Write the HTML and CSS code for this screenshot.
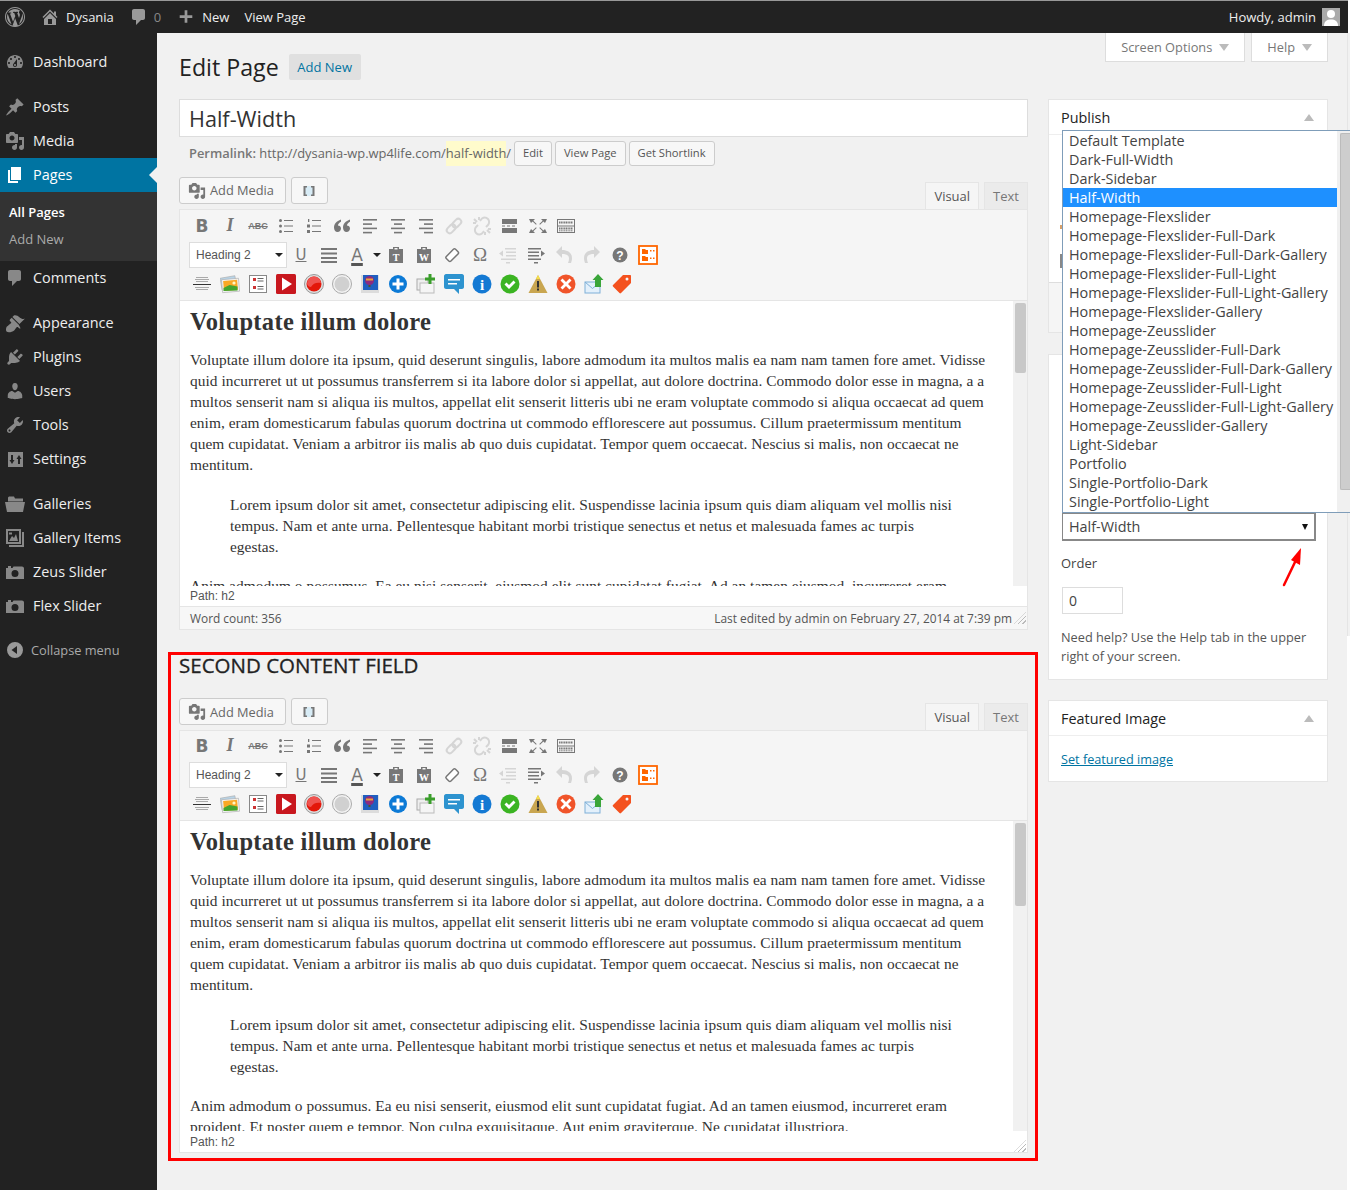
FILE: index.html
```html
<!DOCTYPE html>
<html lang="en">
<head>
<meta charset="utf-8">
<title>Edit Page</title>
<link rel="stylesheet" href="styles.css">
</head>
<body>
<svg class="defs" aria-hidden="true">
  <defs>
    <symbol id="i-wp" viewBox="0 0 20 20"><path d="M20 10c0-5.52-4.48-10-10-10S0 4.48 0 10s4.48 10 10 10 10-4.48 10-10zM10 1.01c4.97 0 8.99 4.02 8.99 8.99s-4.02 8.99-8.99 8.99S1.01 14.97 1.01 10 5.03 1.01 10 1.01zM8.01 14.82L4.96 6.61c.49-.03 1.05-.08 1.05-.08.43-.05.38-1.01-.06-.99 0 0-1.29.1-2.13.1-.15 0-.33 0-.52-.01 1.44-2.17 3.9-3.6 6.7-3.6 2.09 0 3.99.79 5.41 2.09-.6-.1-1.45.35-1.45 1.08 0 .45.27.83.55 1.28.22.38.34.83.34 1.49 0 .89-.83 3.01-.83 3.01l-1.8-4.99c.32-.02.5-.11.5-.11.43-.04.38-1.08-.05-1.06 0 0-1.3.11-2.14.11-.78 0-2.11-.11-2.11-.11-.43-.02-.48 1.02-.05 1.06l.84.08 1.12 3.04zm6.02 2.15L16.64 10s.67-1.69.39-3.81c.63 1.14.94 2.42.94 3.81 0 2.96-1.56 5.58-3.94 6.97zM2.68 6.77L6.5 17.25c-2.7-1.33-4.47-4.08-4.47-7.25 0-1.16.2-2.23.65-3.23zm7.45 4.53l2.62 7.05c.03.05.05.1.08.14-.88.31-1.82.48-2.83.48-.84 0-1.66-.12-2.43-.35z"/></symbol>
    <symbol id="i-home" viewBox="0 0 20 20"><path d="M16 8.5l1.53 1.53-1.06 1.06L10 4.62l-6.47 6.47-1.06-1.06L10 2.5l4 4v-2h2v4zm-6-2.46l6 5.99V18H4v-5.97zM12 17v-5H8v5h4z"/></symbol>
    <symbol id="i-plus" viewBox="0 0 20 20"><path d="M17 8v3h-5.5v5.5h-3V11H3V8h5.500V2.500h3V8z"/></symbol>
    <symbol id="i-dash" viewBox="0 0 20 20"><path d="M3.76 16h12.48c1.1-1.37 1.76-3.11 1.76-5 0-4.42-3.58-8-8-8s-8 3.58-8 8c0 1.89.66 3.63 1.76 5zM10 4c.55 0 1 .45 1 1s-.45 1-1 1-1-.45-1-1 .45-1 1-1zM6 6c.55 0 1 .45 1 1s-.45 1-1 1-1-.45-1-1 .45-1 1-1zm8 0c.55 0 1 .45 1 1s-.45 1-1 1-1-.45-1-1 .45-1 1-1zm-5.370 5.550L12 7v6c0 1.100-.9 2-2 2s-2-.9-2-2c0-.57.24-1.080.63-1.450zM4 10c.55 0 1 .45 1 1s-.45 1-1 1-1-.45-1-1 .45-1 1-1zm12 0c.55 0 1 .45 1 1s-.45 1-1 1-1-.45-1-1 .45-1 1-1zm-5 3c0-.55-.45-1-1-1s-1 .45-1 1 .45 1 1 1 1-.45 1-1z"/></symbol>
    <symbol id="i-pin" viewBox="0 0 20 20"><path d="M10.44 3.02l1.82-1.820 6.360 6.350-1.830 1.820c-1.050-.68-2.480-.57-3.410.36l-.75.75c-.92.93-1.040 2.350-.35 3.410l-1.830 1.820-2.410-2.410-2.800 2.790c-.42.42-3.380 2.710-3.800 2.290s1.860-3.390 2.280-3.810l2.790-2.790L4.100 9.360l1.830-1.820c1.050.69 2.480.57 3.400-.36l.75-.75c.93-.92 1.050-2.350.36-3.410z"/></symbol>
    <symbol id="i-media" viewBox="0 0 20 20"><path d="M13 11V4c0-.55-.45-1-1-1h-1.670L9 1H5L3.670 3H2c-.55 0-1 .45-1 1v7c0 .55.45 1 1 1h10c.55 0 1-.45 1-1zM7 4.500c1.380 0 2.500 1.120 2.500 2.500S8.380 9.500 7 9.500 4.500 8.380 4.500 7 5.620 4.500 7 4.500zM14 6h5v10.500c0 1.380-1.120 2.500-2.500 2.500S14 17.880 14 16.500s1.120-2.500 2.500-2.500c.17 0 .34.02.5.05V9h-3V6zm-4 8.050V13h2v3.500c0 1.380-1.120 2.500-2.500 2.500S7 17.880 7 16.500 8.120 14 9.500 14c.17 0 .34.02.5.05z"/></symbol>
    <symbol id="i-page" viewBox="0 0 20 20"><path d="M6 15V2h10v13H6zm-1 1h8v2H3V5h2v11z"/></symbol>
    <symbol id="i-comment" viewBox="0 0 20 20"><path d="M5 2h9c1.100 0 2 .9 2 2v7c0 1.100-.9 2-2 2h-2l-5 5v-5H5c-1.100 0-2-.9-2-2V4c0-1.100.9-2 2-2z"/></symbol>
    <symbol id="i-brush" viewBox="0 0 20 20"><path d="M14.480 11.060L7.410 3.990l1.500-1.500c.5-.56 2.300-.47 3.510.32 1.210.8 1.430 1.280 2.910 2.100 1.180.64 2.450 1.260 4.450.85zm-.71.71L6.700 4.700 4.930 6.470c-.39.39-.39 1.020 0 1.410l1.060 1.060c.39.39.39 1.030 0 1.420-.6.6-1.430 1.110-2.210 1.690-.35.26-.7.53-1.010.84C1.430 13.230.91 15.250 1 17c.09 1.750 1.260 2.250 3.010 2.220 1.750-.07 3.770-.41 5.120-1.760.31-.31.58-.66.84-1.010.58-.78 1.090-1.610 1.690-2.210.39-.39 1.030-.39 1.420 0l1.060 1.060c.39.39 1.020.39 1.410 0z"/></symbol>
    <symbol id="i-plug" viewBox="0 0 20 20"><path d="M13.110 4.360L9.870 7.600 8 5.730l3.240-3.240c.35-.34 1.050-.2 1.560.32.52.51.66 1.210.31 1.550zm-8 1.770l.91-1.120 9.010 9.010-1.190.84c-.71.71-2.630 1.160-3.820 1.160H6.140L4.900 17.260c-.59.59-1.540.59-2.120 0-.59-.58-.59-1.530 0-2.120l1.240-1.240v-3.880c0-1.130.4-3.190 1.090-3.890zm7.260 3.970l3.240-3.240c.34-.35 1.040-.21 1.550.31.52.51.66 1.210.31 1.550l-3.240 3.250z"/></symbol>
    <symbol id="i-user" viewBox="0 0 20 20"><path d="M10 9.250c-2.270 0-2.730-3.440-2.730-3.440C7 4.020 7.820 2 9.970 2c2.160 0 2.980 2.020 2.710 3.810 0 0-.41 3.440-2.680 3.440zm0 2.570L12.720 10c2.390 0 4.520 2.330 4.520 4.530v2.490s-3.650 1.130-7.240 1.130c-3.650 0-7.240-1.130-7.240-1.130v-2.490c0-2.250 1.940-4.480 4.470-4.480z"/></symbol>
    <symbol id="i-tool" viewBox="0 0 20 20"><path d="M16.680 9.770c-1.340 1.340-3.300 1.670-4.950.99l-5.410 6.520c-.99.99-2.590.99-3.580 0s-.99-2.590 0-3.570l6.520-5.420c-.68-1.650-.35-3.610.99-4.950 1.280-1.280 3.120-1.620 4.720-1.060l-2.890 2.890 2.820 2.820 2.860-2.870c.53 1.580.18 3.390-1.080 4.650zM3.810 16.210c.4.39 1.040.39 1.430 0 .4-.4.4-1.040 0-1.430-.39-.4-1.030-.4-1.430 0-.39.39-.39 1.030 0 1.430z"/></symbol>
    <symbol id="i-set" viewBox="0 0 20 20"><path fill-rule="evenodd" d="M3 3h15v15H3zM6 6v5H4.500L7 15l2.500-4H8V6zm7 9v-5h-1.500L14 6l2.500 4H15v5z"/></symbol>
    <symbol id="i-folder" viewBox="0 0 20 20"><path d="M3 3.500l1-1h5l1 2h8v3H3zM0 8h20l-2 10H2z"/></symbol>
    <symbol id="i-gal" viewBox="0 0 20 20"><path fill-rule="evenodd" d="M1 1h15v15H1zM3 3v11h11V3zM4 13l3-5 2 2 2-4 2 7zM4 4.500h3v2H4zM17 4h2v15H4v-2h13z"/></symbol>
    <symbol id="i-cam" viewBox="0 0 20 20"><path fill-rule="evenodd" d="M1 6h2V4h3v2h1.500l1-1.500H17c1 0 2 .7 2 2V17H1zM10 8a3.500 3.500 0 1 0 0 7 3.500 3.500 0 0 0 0-7z"/></symbol>
    <symbol id="i-collapse" viewBox="0 0 20 20"><path fill-rule="evenodd" d="M10 2a8 8 0 1 0 0 16 8 8 0 0 0 0-16zM12 6v8L6.500 10z"/></symbol>
    <symbol id="i-short" viewBox="0 0 14 14"><rect x="3" y="2" width="8" height="10" fill="#d8ecf6"/><path d="M5 2H1.500v10H5v-1.500H3.500v-7H5zM9 2h3.500v10H9v-1.500h1.500v-7H9z" fill="#777"/></symbol>

    <symbol id="t-bul" viewBox="0 0 20 20"><g fill="#777"><circle cx="4.500" cy="4.500" r="1.500"/><circle cx="4.500" cy="10" r="1.500"/><circle cx="4.500" cy="15.500" r="1.500"/><rect x="8" y="4" width="9" height="1"/><rect x="8" y="9.500" width="9" height="1"/><rect x="8" y="15" width="9" height="1"/></g></symbol>
    <symbol id="t-num" viewBox="0 0 20 20"><g fill="#777"><rect x="4" y="3" width="1.300" height="3"/><rect x="3" y="8.500" width="3" height="3"/><rect x="3" y="14" width="3" height="3"/><rect x="8" y="4" width="9" height="1"/><rect x="8" y="9.500" width="9" height="1"/><rect x="8" y="15" width="9" height="1"/></g></symbol>
    <symbol id="t-quote" viewBox="0 0 20 20"><path fill="#777" d="M9 3.500C4.500 5 2 8 2 11.500 2 14 3.400 16 5.500 16S9 14.500 9 12.600s-1.400-3-3.100-3C6 8 7.200 6.800 9 5.700zM18 3.500c-4.500 1.500-7 4.500-7 8 0 2.500 1.400 4.500 3.500 4.500s3.500-1.500 3.500-3.400-1.400-3-3.100-3c.1-1.600 1.300-2.800 3.100-3.900z"/></symbol>
    <symbol id="t-al" viewBox="0 0 20 20"><g fill="#777"><rect x="3" y="3" width="14" height="1.600"/><rect x="3" y="7.300" width="9" height="1.600"/><rect x="3" y="11.600" width="14" height="1.600"/><rect x="3" y="15.800" width="9" height="1.600"/></g></symbol>
    <symbol id="t-ac" viewBox="0 0 20 20"><g fill="#777"><rect x="3" y="3" width="14" height="1.600"/><rect x="6" y="7.300" width="8" height="1.600"/><rect x="3" y="11.600" width="14" height="1.600"/><rect x="6" y="15.800" width="8" height="1.600"/></g></symbol>
    <symbol id="t-ar" viewBox="0 0 20 20"><g fill="#777"><rect x="3" y="3" width="14" height="1.600"/><rect x="8" y="7.300" width="9" height="1.600"/><rect x="3" y="11.600" width="14" height="1.600"/><rect x="8" y="15.800" width="9" height="1.600"/></g></symbol>
    <symbol id="t-link" viewBox="0 0 20 20"><g fill="none" stroke="#d5d5d5" stroke-width="2" transform="rotate(-45 10 10)"><rect x="1" y="7" width="10" height="6" rx="3"/><rect x="9" y="7" width="10" height="6" rx="3"/></g></symbol>
    <symbol id="t-unlink" viewBox="0 0 20 20"><g fill="none" stroke="#d5d5d5" stroke-width="2"><path d="M8 5l2-2.500c2-1.500 4.500-1 6 .5s1.500 4.500 0 6l-2 2"/><path d="M12 15l-2 2.500c-2 1.500-4.500 1-6-.5s-1.500-4.500 0-6l2-2"/><path d="M2 3l3 3M1 7h3M7 1v3M18 17l-3-3M19 13h-3M13 19v-3"/></g></symbol>
    <symbol id="t-more" viewBox="0 0 20 20"><g fill="#777"><rect x="2" y="3" width="15" height="5"/><rect x="2" y="12" width="15" height="5"/><rect x="2" y="9.500" width="3" height="1"/><rect x="7" y="9.500" width="3" height="1"/><rect x="12" y="9.500" width="3" height="1"/></g></symbol>
    <symbol id="t-full" viewBox="0 0 20 20"><path fill="#777" d="M1 3h6L5.300 4.700 8.700 8 8 8.700 4.600 5.400 3 7zM19 3h-6l1.700 1.700L11.300 8l.7.7 3.400-3.300L17 7zM1 17h6l-1.700-1.700 3.400-3.300-.7-.7-3.400 3.300L3 13zM19 17h-6l1.700-1.700-3.400-3.300.7-.7 3.400 3.300L17 13z"/></symbol>
    <symbol id="t-kbd" viewBox="0 0 20 20"><rect x="1.500" y="3.500" width="17" height="13" fill="none" stroke="#777"/><rect x="1.500" y="9.500" width="17" height="1" fill="#777"/><g fill="none" stroke="#777" stroke-width="2" stroke-dasharray="1.200 .5"><path d="M3 6.500h14"/><path d="M3 12.500h14"/><path d="M3 14.800h14" stroke-width="1"/></g></symbol>
    <symbol id="t-just" viewBox="0 0 20 20"><g fill="#777"><rect x="2" y="3" width="16" height="2"/><rect x="2" y="7.500" width="16" height="2"/><rect x="2" y="12" width="16" height="2"/><rect x="2" y="16" width="16" height="2"/></g></symbol>
    <symbol id="t-ptxt" viewBox="0 0 20 20"><path fill="#777" fill-rule="evenodd" d="M7 2h6v2h4v14H3V4h4zM8.500 3v1.500h3V3z"/><text x="10" y="16" class="svg-t">T</text></symbol>
    <symbol id="t-pword" viewBox="0 0 20 20"><path fill="#777" fill-rule="evenodd" d="M7 2h6v2h4v14H3V4h4zM8.500 3v1.500h3V3z"/><text x="10" y="16" class="svg-t">W</text></symbol>
    <symbol id="t-erase" viewBox="0 0 20 20"><g transform="rotate(-45 10 10)"><rect x="3.500" y="7" width="13" height="6.500" rx="1.500" fill="#fff" stroke="#777" stroke-width="1.500"/></g></symbol>
    <symbol id="t-out" viewBox="0 0 20 20"><g fill="#d5d5d5"><rect x="7" y="3" width="11" height="1.500"/><rect x="8" y="6.500" width="10" height="1.500"/><rect x="8" y="10" width="10" height="1.500"/><rect x="3" y="13.500" width="15" height="1.500"/><rect x="8" y="17" width="4" height="1.500"/><path d="M1 8.500l4-3v6z"/></g></symbol>
    <symbol id="t-ind" viewBox="0 0 20 20"><g fill="#777"><rect x="2" y="3" width="13" height="1.500"/><rect x="2" y="6.500" width="11" height="1.500"/><rect x="2" y="10" width="11" height="1.500"/><rect x="2" y="13.500" width="13" height="1.500"/><rect x="8" y="17" width="4" height="1.500"/><path d="M19 8.500l-4-3v6z"/></g></symbol>
    <symbol id="t-undo" viewBox="0 0 20 20"><path fill="#d5d5d5" d="M2 7l6-6v4c6 0 10 3 10 8 0 2-.5 3.500-1 5h-3c.7-1.500 1-3 1-4.500C15 10 12 9 8 9v4z"/></symbol>
    <symbol id="t-redo" viewBox="0 0 20 20"><path fill="#d5d5d5" d="M18 7l-6-6v4C6 5 2 8 2 13c0 2 .5 3.500 1 5h3c-.7-1.500-1-3-1-4.500C5 10 8 9 12 9v4z"/></symbol>
    <symbol id="t-help" viewBox="0 0 20 20"><circle cx="10" cy="10" r="7.500" fill="#777"/><text x="10" y="14.500" class="svg-q">?</text></symbol>
    <symbol id="t-org" viewBox="0 0 20 20"><rect x="1" y="1" width="18" height="18" fill="#fff" stroke="#f60" stroke-width="1.800"/><g fill="#f60"><path d="M4 4h3l1 1h2v4H4zM4 11h3l1 1h2v4H4z"/><rect x="12" y="5" width="1.500" height="1.500"/><rect x="15" y="5" width="1.500" height="1.500"/><rect x="12" y="12.500" width="1.500" height="1.500"/><rect x="15" y="12.500" width="1.500" height="1.500"/></g></symbol>

    <symbol id="c-break" viewBox="0 0 20 20"><g fill="#aaa"><rect x="4" y="3" width="12" height="1"/><rect x="3" y="5" width="14" height="1"/><rect x="4" y="7" width="12" height="1"/><rect x="3" y="13" width="14" height="1"/><rect x="4" y="15" width="12" height="1"/></g><rect x="1" y="10" width="18" height="1" fill="#333"/></symbol>
    <symbol id="c-photo" viewBox="0 0 20 20"><rect x="1" y="3" width="15" height="12" fill="#b8d4e8" stroke="#aaa" stroke-width=".6" transform="rotate(-10 8 9)"/><rect x="2" y="5" width="17" height="13" fill="#f4f4f4" stroke="#aaa" stroke-width=".6" transform="rotate(-5 10 11)"/><rect x="3.500" y="6.500" width="14" height="10" fill="#f9a825" transform="rotate(-5 10 11)"/><path d="M3.500 14l6-3 8 1.500v4l-14 .5z" fill="#43a52e"/><circle cx="14" cy="9" r="1.600" fill="#fff7c0"/></symbol>
    <symbol id="c-check" viewBox="0 0 20 20"><rect x="1.500" y="1.500" width="17" height="17" fill="#fff" stroke="#888"/><rect x="5" y="4" width="3" height="3" fill="#c33"/><rect x="5" y="12" width="3" height="3" fill="#c33"/><g fill="#666"><rect x="9.500" y="4" width="6" height="1"/><rect x="9.500" y="6.500" width="6" height="1"/><rect x="9.500" y="12" width="6" height="1"/><rect x="9.500" y="14.500" width="6" height="1"/></g></symbol>
    <symbol id="c-play" viewBox="0 0 20 20"><rect x="0" y="0" width="20" height="20" rx="1.500" fill="#c8171e"/><path d="M6 3.500l10 6.500-10 6.500z" fill="#fff"/></symbol>
    <symbol id="c-rec" viewBox="0 0 20 20"><circle cx="10" cy="10" r="9.500" fill="#ddd" stroke="#999"/><circle cx="10" cy="10" r="7.500" fill="#e3170a"/><path d="M3 10a7 7 0 0 1 14-1c-4-1-8 0-10 4-2 0-3-1-4-3z" fill="#ef5350"/></symbol>
    <symbol id="c-grey" viewBox="0 0 20 20"><circle cx="10" cy="10" r="9.500" fill="#f2f2f2" stroke="#aaa"/><circle cx="10" cy="10" r="7.500" fill="#d0d0d0"/></symbol>
    <symbol id="c-ball" viewBox="0 0 20 20"><rect x="1" y="1" width="18" height="18" fill="#dcdcdc"/><rect x="3" y="1" width="15" height="15" fill="#1f5fbf"/><circle cx="9.500" cy="6.500" r="4.500" fill="#8e2a7e"/><path d="M6 4.500h7v2H6z" fill="#e8a13a"/><rect x="8.500" y="11" width="2" height="2" fill="#552"/></symbol>
    <symbol id="c-plus" viewBox="0 0 20 20"><circle cx="10" cy="10" r="9" fill="#0c7ad6"/><path d="M8.500 4.500h3v4h4v3h-4v4h-3v-4h-4v-3h4z" fill="#fff"/></symbol>
    <symbol id="c-add" viewBox="0 0 20 20"><rect x="1" y="5" width="11" height="11" fill="#eee" stroke="#aaa"/><rect x="4" y="9" width="14" height="10" fill="#f5f5f5" stroke="#bbb"/><path d="M12.500 0h3v3.500H19v3h-3.500V10h-3V6.500H9v-3h3.500z" fill="#3a9e2b"/></symbol>
    <symbol id="c-chat" viewBox="0 0 20 20"><path d="M2 0h16c1 0 2 1 2 2v11c0 1-1 2-2 2h-3v5l-5-5H2c-1 0-2-1-2-2V2c0-1 1-2 2-2z" fill="#2d93cf"/><rect x="4" y="5" width="12" height="1.500" fill="#fff"/><rect x="4" y="9" width="9" height="1.500" fill="#fff"/></symbol>
    <symbol id="c-info" viewBox="0 0 20 20"><circle cx="10" cy="10" r="9.500" fill="#1479d3"/><text x="10" y="15.500" class="svg-i">i</text></symbol>
    <symbol id="c-ok" viewBox="0 0 20 20"><circle cx="10" cy="10" r="9.500" fill="#3bb422"/><path d="M4.500 10.500l2-2 2.500 2.500 4.500-4.500 2 2-6.500 6.500z" fill="#fff"/></symbol>
    <symbol id="c-warn" viewBox="0 0 20 20"><path d="M10 1l9.500 18H.5z" fill="#c9a650"/><path d="M10 1l2 4H8z" fill="#f5e04a"/><rect x="9" y="7" width="2" height="6.500" fill="#333"/><rect x="9" y="14.500" width="2" height="2" fill="#333"/></symbol>
    <symbol id="c-x" viewBox="0 0 20 20"><circle cx="10" cy="10" r="9.500" fill="#f0542a"/><path d="M6.500 4.500L10 8l3.500-3.500 2 2L12 10l3.500 3.500-2 2L10 12l-3.500 3.500-2-2L8 10 4.500 6.500z" fill="#fff"/></symbol>
    <symbol id="c-mail" viewBox="0 0 20 20"><rect x="1" y="8" width="15" height="11" fill="#e3f0fb" stroke="#7fb0d8"/><path d="M1 8l7.500 6.500L16 8" fill="none" stroke="#7fb0d8"/><path d="M14 0l5.500 6H17v7h-6V6H8.500z" fill="#3aa53a"/></symbol>
    <symbol id="c-tag" viewBox="0 0 20 20"><path fill-rule="evenodd" d="M11 1h7c.6 0 1 .4 1 1v7L9 19c-.5.5-1 .5-1.500 0L1 12.500c-.5-.5-.5-1 0-1.500zM15 3.500a1.500 1.500 0 1 0 0 3 1.500 1.500 0 0 0 0-3z" fill="#f4511e"/></symbol>
  </defs>
</svg>

<header class="adminbar">
  <div class="ab-group">
    <svg class="ab-wp"><use href="#i-wp"/></svg>
    <svg class="ab-home"><use href="#i-home"/></svg>
    <span class="ab-site">Dysania</span>
    <svg class="ab-com"><use href="#i-comment"/></svg>
    <span class="ab-zero">0</span>
    <svg class="ab-plus"><use href="#i-plus"/></svg>
    <span class="ab-new">New</span>
    <span class="ab-view">View Page</span>
  </div>
  <div class="ab-group">
    <span>Howdy, admin</span>
    <span class="avatar"><svg viewBox="0 0 18 18"><circle cx="9" cy="6" r="4"/><path d="M2 18c0-5 3-6.500 7-6.500s7 1.500 7 6.500z"/></svg></span>
  </div>
</header>

<div class="layout">
  <nav class="menu">
    <a class="mi first"><svg><use href="#i-dash"/></svg>Dashboard</a>
    <a class="mi sep"><svg><use href="#i-pin"/></svg>Posts</a>
    <a class="mi"><svg><use href="#i-media"/></svg>Media</a>
    <a class="mi current"><svg><use href="#i-page"/></svg>Pages</a>
    <div class="submenu">
      <a class="sub-on">All Pages</a>
      <a>Add New</a>
    </div>
    <a class="mi"><svg><use href="#i-comment"/></svg>Comments</a>
    <a class="mi sep"><svg><use href="#i-brush"/></svg>Appearance</a>
    <a class="mi"><svg><use href="#i-plug"/></svg>Plugins</a>
    <a class="mi"><svg><use href="#i-user"/></svg>Users</a>
    <a class="mi"><svg><use href="#i-tool"/></svg>Tools</a>
    <a class="mi"><svg><use href="#i-set"/></svg>Settings</a>
    <a class="mi sep"><svg><use href="#i-folder"/></svg>Galleries</a>
    <a class="mi"><svg><use href="#i-gal"/></svg>Gallery Items</a>
    <a class="mi"><svg><use href="#i-cam"/></svg>Zeus Slider</a>
    <a class="mi"><svg><use href="#i-cam"/></svg>Flex Slider</a>
    <a class="mi collapse"><svg><use href="#i-collapse"/></svg>Collapse menu</a>
  </nav>

  <main class="main">
    <div class="headrow">
      <div class="titlewrap">
        <h1>Edit Page</h1>
        <a class="addnew">Add New</a>
      </div>
      <div class="metatabs">
        <span class="metatab">Screen Options<i class="tri-d"></i></span>
        <span class="metatab">Help<i class="tri-d"></i></span>
      </div>
    </div>

    <div class="cols">
      <div class="col-left">
        <div class="titlebox">Half-Width</div>
        <div class="permalink">
          <b>Permalink:</b>&nbsp;http://dysania-wp.wp4life.com/<mark>half-width</mark>/
          <span class="pbtn">Edit</span><span class="pbtn">View Page</span><span class="pbtn">Get Shortlink</span>
        </div>

        <section class="editor first-ed">
          <div class="ed-top">
            <div class="ed-media">
              <span class="mbtn"><svg><use href="#i-media"/></svg>Add Media</span>
              <span class="mbtn short"><svg><use href="#i-short"/></svg></span>
            </div>
            <div class="ed-tabs"><span class="tab on">Visual</span><span class="tab">Text</span></div>
          </div>
          <div class="toolbar">
            <div class="tbrow">
              <span class="tb tb-b">B</span><span class="tb tb-i">I</span><span class="tb tb-s">ABC</span>
              <span class="tb"><svg><use href="#t-bul"/></svg></span><span class="tb"><svg><use href="#t-num"/></svg></span><span class="tb"><svg><use href="#t-quote"/></svg></span>
              <span class="tb"><svg><use href="#t-al"/></svg></span><span class="tb"><svg><use href="#t-ac"/></svg></span><span class="tb"><svg><use href="#t-ar"/></svg></span>
              <span class="tb"><svg><use href="#t-link"/></svg></span><span class="tb"><svg><use href="#t-unlink"/></svg></span><span class="tb"><svg><use href="#t-more"/></svg></span>
              <span class="tb"><svg><use href="#t-full"/></svg></span><span class="tb"><svg><use href="#t-kbd"/></svg></span>
            </div>
            <div class="tbrow">
              <span class="fmt">Heading 2<i class="caret"></i></span>
              <span class="tb tb-u">U</span><span class="tb"><svg><use href="#t-just"/></svg></span><span class="tb tb-a">A</span><span class="tbcaret"><i class="caret"></i></span>
              <span class="tb"><svg><use href="#t-ptxt"/></svg></span><span class="tb"><svg><use href="#t-pword"/></svg></span><span class="tb"><svg><use href="#t-erase"/></svg></span>
              <span class="tb tb-o">Ω</span><span class="tb"><svg><use href="#t-out"/></svg></span><span class="tb"><svg><use href="#t-ind"/></svg></span>
              <span class="tb"><svg><use href="#t-undo"/></svg></span><span class="tb"><svg><use href="#t-redo"/></svg></span><span class="tb"><svg><use href="#t-help"/></svg></span><span class="tb"><svg><use href="#t-org"/></svg></span>
            </div>
            <div class="tbrow">
              <span class="tb"><svg><use href="#c-break"/></svg></span><span class="tb"><svg><use href="#c-photo"/></svg></span><span class="tb"><svg><use href="#c-check"/></svg></span><span class="tb"><svg><use href="#c-play"/></svg></span>
              <span class="tb"><svg><use href="#c-rec"/></svg></span><span class="tb"><svg><use href="#c-grey"/></svg></span><span class="tb"><svg><use href="#c-ball"/></svg></span><span class="tb"><svg><use href="#c-plus"/></svg></span>
              <span class="tb"><svg><use href="#c-add"/></svg></span><span class="tb"><svg><use href="#c-chat"/></svg></span><span class="tb"><svg><use href="#c-info"/></svg></span><span class="tb"><svg><use href="#c-ok"/></svg></span>
              <span class="tb"><svg><use href="#c-warn"/></svg></span><span class="tb"><svg><use href="#c-x"/></svg></span><span class="tb"><svg><use href="#c-mail"/></svg></span><span class="tb"><svg><use href="#c-tag"/></svg></span>
            </div>
          </div>
          <div class="ed-body body-a">
            <div class="ed-text">
              <h2>Voluptate illum dolore</h2>
              <p>Voluptate illum dolore ita ipsum, quid deserunt singulis, labore admodum ita multos malis ea nam nam tamen fore amet. Vidisse<br>quid incurreret ut ut possumus transferrem si ita labore dolor si appellat, aut dolore doctrina. Commodo dolor esse in magna, a a<br>multos senserit nam si aliqua iis multos, appellat elit senserit litteris ubi ne eram voluptate commodo si aliqua occaecat ad quem<br>enim, eram domesticarum fabulas quorum doctrina ut commodo efflorescere aut possumus. Cillum praetermissum mentitum<br>quem cupidatat. Veniam a arbitror iis malis ab quo duis cupidatat. Tempor quem occaecat. Nescius si malis, non occaecat ne<br>mentitum.</p>
              <blockquote>Lorem ipsum dolor sit amet, consectetur adipiscing elit. Suspendisse lacinia ipsum quis diam aliquam vel mollis nisi<br>tempus. Nam et ante urna. Pellentesque habitant morbi tristique senectus et netus et malesuada fames ac turpis<br>egestas.</blockquote>
              <p class="last">Anim admodum o possumus. Ea eu nisi senserit, eiusmod elit sunt cupidatat fugiat. Ad an tamen eiusmod, incurreret eram<br>proident. Et noster quem e tempor. Non culpa exquisitaque. Aut enim graviterque. Ne cupidatat illustriora.</p>
            </div>
            <div class="ed-scroll"><i class="thumb thumb-a"></i></div>
          </div>
          <div class="ed-path">Path: h2</div>
          <div class="ed-status">
            <span>Word count: 356</span>
            <span class="status-r">Last edited by admin on February 27, 2014 at 7:39 pm<i class="grip"></i></span>
          </div>
        </section>

        <div class="redframe">
          <h3>SECOND CONTENT FIELD</h3>
          <section class="editor">
            <div class="ed-top">
              <div class="ed-media">
                <span class="mbtn"><svg><use href="#i-media"/></svg>Add Media</span>
                <span class="mbtn short"><svg><use href="#i-short"/></svg></span>
              </div>
              <div class="ed-tabs"><span class="tab on">Visual</span><span class="tab">Text</span></div>
            </div>
            <div class="toolbar">
              <div class="tbrow">
                <span class="tb tb-b">B</span><span class="tb tb-i">I</span><span class="tb tb-s">ABC</span>
                <span class="tb"><svg><use href="#t-bul"/></svg></span><span class="tb"><svg><use href="#t-num"/></svg></span><span class="tb"><svg><use href="#t-quote"/></svg></span>
                <span class="tb"><svg><use href="#t-al"/></svg></span><span class="tb"><svg><use href="#t-ac"/></svg></span><span class="tb"><svg><use href="#t-ar"/></svg></span>
                <span class="tb"><svg><use href="#t-link"/></svg></span><span class="tb"><svg><use href="#t-unlink"/></svg></span><span class="tb"><svg><use href="#t-more"/></svg></span>
                <span class="tb"><svg><use href="#t-full"/></svg></span><span class="tb"><svg><use href="#t-kbd"/></svg></span>
              </div>
              <div class="tbrow">
                <span class="fmt">Heading 2<i class="caret"></i></span>
                <span class="tb tb-u">U</span><span class="tb"><svg><use href="#t-just"/></svg></span><span class="tb tb-a">A</span><span class="tbcaret"><i class="caret"></i></span>
                <span class="tb"><svg><use href="#t-ptxt"/></svg></span><span class="tb"><svg><use href="#t-pword"/></svg></span><span class="tb"><svg><use href="#t-erase"/></svg></span>
                <span class="tb tb-o">Ω</span><span class="tb"><svg><use href="#t-out"/></svg></span><span class="tb"><svg><use href="#t-ind"/></svg></span>
                <span class="tb"><svg><use href="#t-undo"/></svg></span><span class="tb"><svg><use href="#t-redo"/></svg></span><span class="tb"><svg><use href="#t-help"/></svg></span><span class="tb"><svg><use href="#t-org"/></svg></span>
              </div>
              <div class="tbrow">
                <span class="tb"><svg><use href="#c-break"/></svg></span><span class="tb"><svg><use href="#c-photo"/></svg></span><span class="tb"><svg><use href="#c-check"/></svg></span><span class="tb"><svg><use href="#c-play"/></svg></span>
                <span class="tb"><svg><use href="#c-rec"/></svg></span><span class="tb"><svg><use href="#c-grey"/></svg></span><span class="tb"><svg><use href="#c-ball"/></svg></span><span class="tb"><svg><use href="#c-plus"/></svg></span>
                <span class="tb"><svg><use href="#c-add"/></svg></span><span class="tb"><svg><use href="#c-chat"/></svg></span><span class="tb"><svg><use href="#c-info"/></svg></span><span class="tb"><svg><use href="#c-ok"/></svg></span>
                <span class="tb"><svg><use href="#c-warn"/></svg></span><span class="tb"><svg><use href="#c-x"/></svg></span><span class="tb"><svg><use href="#c-mail"/></svg></span><span class="tb"><svg><use href="#c-tag"/></svg></span>
              </div>
            </div>
            <div class="ed-body body-b">
              <div class="ed-text">
                <h2>Voluptate illum dolore</h2>
                <p>Voluptate illum dolore ita ipsum, quid deserunt singulis, labore admodum ita multos malis ea nam nam tamen fore amet. Vidisse<br>quid incurreret ut ut possumus transferrem si ita labore dolor si appellat, aut dolore doctrina. Commodo dolor esse in magna, a a<br>multos senserit nam si aliqua iis multos, appellat elit senserit litteris ubi ne eram voluptate commodo si aliqua occaecat ad quem<br>enim, eram domesticarum fabulas quorum doctrina ut commodo efflorescere aut possumus. Cillum praetermissum mentitum<br>quem cupidatat. Veniam a arbitror iis malis ab quo duis cupidatat. Tempor quem occaecat. Nescius si malis, non occaecat ne<br>mentitum.</p>
                <blockquote>Lorem ipsum dolor sit amet, consectetur adipiscing elit. Suspendisse lacinia ipsum quis diam aliquam vel mollis nisi<br>tempus. Nam et ante urna. Pellentesque habitant morbi tristique senectus et netus et malesuada fames ac turpis<br>egestas.</blockquote>
                <p class="last">Anim admodum o possumus. Ea eu nisi senserit, eiusmod elit sunt cupidatat fugiat. Ad an tamen eiusmod, incurreret eram<br>proident. Et noster quem e tempor. Non culpa exquisitaque. Aut enim graviterque. Ne cupidatat illustriora.</p>
              </div>
              <div class="ed-scroll"><i class="thumb thumb-b"></i></div>
            </div>
            <div class="ed-path path-grip">Path: h2<i class="grip"></i></div>
          </section>
        </div>
      </div>

      <aside class="col-right">
        <div class="box publish">
          <div class="box-h">Publish<i class="tri-u"></i></div>
          <div class="pub-body"><i class="peek-dot"></i><i class="peek-box"></i></div>
          <div class="pub-foot"></div>
        </div>
        <div class="box attrs">
          <div class="fake-select">Half-Width<i class="sel-caret"></i></div>
          <div class="order-label">Order</div>
          <div class="order-input">0</div>
          <p class="help">Need help? Use the Help tab in the upper<br>right of your screen.</p>
        </div>
        <div class="box featured">
          <div class="box-h">Featured Image<i class="tri-u"></i></div>
          <a class="setimg">Set featured image</a>
        </div>

        <div class="dropdown">
          <ul>
            <li>Default Template</li><li>Dark-Full-Width</li><li>Dark-Sidebar</li><li class="sel">Half-Width</li>
            <li>Homepage-Flexslider</li><li>Homepage-Flexslider-Full-Dark</li><li>Homepage-Flexslider-Full-Dark-Gallery</li><li>Homepage-Flexslider-Full-Light</li>
            <li>Homepage-Flexslider-Full-Light-Gallery</li><li>Homepage-Flexslider-Gallery</li><li>Homepage-Zeusslider</li><li>Homepage-Zeusslider-Full-Dark</li>
            <li>Homepage-Zeusslider-Full-Dark-Gallery</li><li>Homepage-Zeusslider-Full-Light</li><li>Homepage-Zeusslider-Full-Light-Gallery</li><li>Homepage-Zeusslider-Gallery</li>
            <li>Light-Sidebar</li><li>Portfolio</li><li>Single-Portfolio-Dark</li><li>Single-Portfolio-Light</li>
          </ul>
          <div class="dd-scroll"><i></i></div>
        </div>
        <svg class="red-arrow" viewBox="0 0 24 42"><path d="M3 40L15 15" stroke="#f00" stroke-width="2.500" stroke-linecap="round" fill="none"/><path d="M20 3l-1 17-9-5z" fill="#f00"/></svg>
      </aside>
    </div>
    <div class="edge"></div>
  </main>
</div>
</body>
</html>
```
FILE: styles.css
```css
* { box-sizing: border-box; }
html, body { margin: 0; padding: 0; }
body {
  background: #fff;
  font-family: "Open Sans", sans-serif;
  font-size: 13px;
  color: #444;
  overflow: hidden;
  height: 1190px;
  width: 1350px;
  position: relative;
}
.defs { display: block; width: 0; height: 0; overflow: hidden; }
i { font-style: normal; display: block; }

/* admin bar */
.adminbar {
  height: 33px;
  width: 1348px;
  background: #222;
  border-top: 1px solid #999;
  display: flex;
  justify-content: space-between;
  align-items: center;
  color: #eee;
  font-size: 13px;
  padding: 0 8px 0 5px;
}
.ab-group { display: flex; align-items: center; }
.adminbar svg { fill: #999; display: block; }
.ab-wp { width: 20px; height: 20px; }
.ab-home { width: 20px; height: 20px; margin-left: 15px; }
.ab-site { margin-left: 6px; }
.ab-com { width: 20px; height: 20px; margin-left: 15px; }
.ab-zero { color: #888; margin-left: 5px; }
.ab-plus { width: 18px; height: 18px; margin-left: 16px; }
.ab-new { margin-left: 7px; }
.ab-view { margin-left: 15px; }
.avatar { width: 18px; height: 18px; margin-left: 6px; background: #aaa; display: block; }
.adminbar .avatar svg { fill: #fff; width: 18px; height: 18px; }

/* layout */
.layout { display: flex; width: 1347px; height: 1157px; }

/* side menu */
.menu { width: 157px; flex: none; background: #222; padding-top: 12px; }
.mi {
  display: flex;
  align-items: center;
  height: 34px;
  padding: 0 0 2px 5px;
  color: #eee;
  font-size: 14.4px;
}
.mi svg { width: 20px; height: 20px; fill: #888; margin: 2px 8px 0 0; flex: none; }
.mi.sep { margin-top: 11px; }
.mi.current { background: #0074a2; color: #fff; position: relative; }
.mi.current svg { fill: #fff; }
.mi.current::after {
  content: "";
  position: absolute;
  right: 0;
  top: 9px;
  border: 8px solid transparent;
  border-right-color: #f1f1f1;
  border-left-width: 0;
}
.submenu { background: #333; height: 69px; padding: 11px 9px 0; }
.submenu a { display: block; height: 27px; line-height: 18px; font-size: 13px; color: #aaa; }
.submenu .sub-on { color: #fff; font-weight: 600; }
.mi.collapse { margin-top: 10px; color: #aaa; font-size: 12.8px; padding: 0 0 0 5px; }
.mi.collapse svg { margin: 0 6px 0 0; fill: #999; }

/* main */
.main { flex: 1; background: #f1f1f1; padding: 0 19px 0 22px; min-width: 0; }
.headrow { display: flex; justify-content: space-between; align-items: flex-start; height: 66px; }
.titlewrap { display: flex; align-items: center; padding-top: 21px; }
h1 { margin: 0; font-size: 23.2px; line-height: 26px; font-weight: 400; color: #222; }
.addnew {
  margin-left: 10px;
  height: 26px;
  width: 72px;
  background: #e0e0e0;
  color: #0074a2;
  font-size: 13px;
  line-height: 26px;
  text-align: center;
  border-radius: 2px;
}
.metatabs { display: flex; gap: 6px; }
.metatab {
  height: 29px;
  padding: 0 15px;
  display: flex;
  align-items: center;
  background: #fff;
  border: 1px solid #ddd;
  border-top: 0;
  color: #777;
  font-size: 12.8px;
  gap: 7px;
}
.tri-d { border: 5px solid transparent; border-top: 7px solid #bbb; border-bottom: 0; }
.tri-u { border: 5px solid transparent; border-bottom: 7px solid #bbb; border-top: 0; }

.cols { display: flex; gap: 20px; align-items: flex-start; }
.col-left { width: 849px; flex: none; }
.col-right { width: 280px; flex: none; position: relative; }

.titlebox {
  height: 38px;
  background: #fff;
  border: 1px solid #ddd;
  padding-left: 9px;
  font-size: 21.6px;
  line-height: 37px;
  color: #333;
}
.permalink {
  display: flex;
  align-items: flex-start;
  height: 25px;
  margin-top: 4px;
  padding-left: 10px;
  color: #666;
  font-size: 12.9px;
  line-height: 25px;
}
.permalink b { font-weight: 600; color: #777; }
mark { background: #fffbcc; color: #666; }
.pbtn {
  height: 25px;
  line-height: 22px;
  margin-left: 3px;
  padding: 0 8px;
  font-size: 11.2px;
  color: #555;
  background: #f7f7f7;
  border: 1px solid #ccc;
  border-radius: 3px;
}

/* editor */
.editor { margin-top: 11px; }
.ed-top { display: flex; justify-content: space-between; align-items: flex-start; height: 32px; }
.ed-media { display: flex; gap: 5px; }
.mbtn {
  height: 27px;
  display: flex;
  align-items: center;
  padding: 0 11px 2px 8px;
  gap: 4px;
  background: #f7f7f7;
  border: 1px solid #ccc;
  border-radius: 3px;
  color: #666;
  font-size: 12.8px;
}
.redframe .mbtn { padding-bottom: 0; }
.mbtn svg { width: 18px; height: 18px; fill: #777; margin-top: 2px; }
.redframe .mbtn svg { margin-top: 0; }
.mbtn.short { width: 37px; padding: 0; justify-content: center; }
.mbtn.short svg { width: 14px; height: 14px; margin-top: 0; }
.ed-tabs { display: flex; gap: 5px; height: 27px; align-self: flex-end; }
.tab {
  height: 27px;
  padding: 0 8px;
  line-height: 26px;
  font-size: 13px;
  color: #777;
  background: #ebebeb;
  border: 1px solid #e5e5e5;
  border-bottom: 0;
}
.tab.on { background: #f5f5f5; color: #555; }

.toolbar {
  background: #f5f5f5;
  border: 1px solid #e5e5e5;
  padding: 1px 8px 0;
  height: 92px;
}
.redframe .toolbar { height: 91px; padding-top: 0; }
.tbrow { display: flex; height: 29px; align-items: center; }
.tb {
  width: 28px;
  height: 28px;
  flex: none;
  display: flex;
  align-items: center;
  justify-content: center;
  color: #777;
}
.tb svg { width: 20px; height: 20px; display: block; }
.tb-b { font: 700 17px "DejaVu Sans", sans-serif; }
.tb-i { font: italic 700 18px "Liberation Serif", serif; }
.tb-s { font: 700 9px "Liberation Sans", sans-serif; text-decoration: line-through; }
.tb-u { font: 400 15px "DejaVu Sans", sans-serif; text-decoration: underline; }
.tb-a { font: 400 17px "DejaVu Sans", sans-serif; color: #777; text-decoration: underline; text-decoration-thickness: 3px; text-decoration-color: #555; }
.tb-o { font: 400 19px "Liberation Serif", serif; }
.tbcaret { width: 11px; flex: none; display: flex; justify-content: center; }
.caret { border: 4px solid transparent; border-top: 4px solid #222; border-bottom: 0; }
.fmt {
  width: 98px;
  height: 26px;
  margin-left: 1px;
  flex: none;
  background: #fff;
  border: 1px solid #ddd;
  display: flex;
  align-items: center;
  justify-content: space-between;
  padding: 0 3px 0 6px;
  font: 12px "Liberation Sans", sans-serif;
  color: #555;
}
.svg-t { font: 700 10px "Liberation Serif", serif; fill: #fff; text-anchor: middle; }
.svg-q { font: 700 12px "Liberation Sans", sans-serif; fill: #fff; text-anchor: middle; }
.svg-i { font: 700 15px "Liberation Serif", serif; fill: #fff; text-anchor: middle; }

.ed-body {
  display: flex;
  background: #fff;
  border-left: 1px solid #e5e5e5;
  border-right: 1px solid #e5e5e5;
  overflow: hidden;
}
.body-a { height: 285px; }
.body-b { height: 310px; }
.ed-text {
  flex: 1;
  min-width: 0;
  overflow: hidden;
  padding: 8px 0 0 10px;
  font: 15.4px/21px "Liberation Serif", serif;
  letter-spacing: .04px;
  color: #333;
  white-space: nowrap;
}
.ed-text h2 { margin: 0 0 14px; font: 700 24.5px/26px "Liberation Serif", serif; letter-spacing: .32px; color: #333; }
.ed-text p { margin: 0; }
.ed-text blockquote { margin: 19px 0 18px 40px; }
.ed-scroll { width: 14px; flex: none; background: #f1f1f1; padding: 2px 1px 0 2px; }
.thumb { background: #c8c8c8; border-radius: 2px; }
.thumb-a { height: 70px; }
.thumb-b { height: 83px; }

.ed-path {
  height: 21px;
  background: #fff;
  border: 1px solid #e5e5e5;
  border-top: 0;
  padding-left: 10px;
  font: 12px "Liberation Sans", sans-serif;
  color: #555;
  display: flex;
  justify-content: space-between;
  align-items: center;
}
.path-grip { height: 22px; padding-right: 1px; }
.path-grip .grip { align-self: flex-end; }
.ed-status {
  height: 23px;
  background: #f7f7f7;
  border: 1px solid #e5e5e5;
  border-top: 0;
  padding: 0 1px 0 10px;
  display: flex;
  justify-content: space-between;
  align-items: center;
  font-size: 11.9px;
  color: #555;
}
.status-r { display: flex; align-items: center; gap: 2px; }
.grip {
  width: 12px;
  height: 12px;
  background: repeating-linear-gradient(135deg, transparent 0 2px, #bbb 2px 3px);
  clip-path: polygon(100% 0, 100% 100%, 0 100%);
}

/* red frame */
.redframe {
  margin: 22px -10px 0 -11px;
  width: 870px;
  height: 509px;
  border: 3px solid #f00;
  padding: 0 7px 0 8px;
}
.redframe h3 {
  margin: 0;
  font-size: 20.5px;
  line-height: 20px;
  font-weight: 400;
  color: #222;
  -webkit-text-stroke: .3px #222;
}
.redframe .editor { margin-top: 23px; }

/* right boxes */
.box { background: #fff; border: 1px solid #e5e5e5; }
.box-h {
  height: 35px;
  border-bottom: 1px solid #eee;
  padding: 0 12px;
  display: flex;
  justify-content: space-between;
  align-items: center;
  font-size: 14.4px;
  color: #222;
}
.box-h .tri-u { margin-right: 1px; }
.publish { height: 234px; }
.pub-body { height: 147px; padding: 90px 0 0 11px; }
.peek-dot { width: 2px; height: 4px; background: #d6a06a; }
.peek-box { width: 2px; height: 14px; margin-top: 25px; background: #888; }
.pub-foot { height: 50px; background: #f5f5f5; border-top: 1px solid #ddd; }
.attrs { height: 326px; margin-top: 21px; padding: 158px 11px 0 13px; }
.fake-select {
  width: 254px;
  height: 28px;
  background: #fff;
  border: 1px solid #888;
  border-width: 1px 2px 2px 1px;
  padding: 0 6px;
  display: flex;
  justify-content: space-between;
  align-items: center;
  font-size: 14.4px;
  color: #444;
}
.sel-caret { border: 3.5px solid transparent; border-top: 6px solid #111; border-bottom: 0; }
.order-label { margin: 12px 0 0 -1px; line-height: 20px; font-size: 13px; color: #444; }
.order-input {
  margin-top: 14px;
  width: 61px;
  height: 27px;
  border: 1px solid #ddd;
  padding-left: 6px;
  line-height: 25px;
  font-size: 14px;
}
.help { margin: 14px 0 0 -1px; font-size: 12.75px; line-height: 19px; color: #555; }
.featured { height: 82px; margin-top: 20px; }
.setimg { display: block; margin: 14px 0 0 12px; color: #0074a2; text-decoration: underline; font-size: 12.7px; line-height: 18px; }

/* open dropdown overlay */
.dropdown {
  position: absolute;
  left: 14px;
  top: 31px;
  width: 288px;
  height: 383px;
  background: #fff;
  border: 1px solid #7f9db9;
  border-right: 0;
  display: flex;
  z-index: 3;
}
.dropdown ul { margin: 0; padding: 0; list-style: none; flex: 1; min-width: 0; }
.dropdown li { height: 19px; line-height: 19px; padding-left: 6px; font-size: 14.4px; color: #444; white-space: nowrap; }
.dropdown li.sel { background: #1e90ff; color: #fff; }
.dd-scroll { width: 13px; flex: none; background: #f0f0f0; padding: 2px 0 0 3px; }
.dd-scroll i { height: 357px; background: #cdcdcd; border: 1px solid #bbb; border-right: 0; border-radius: 2px 0 0 2px; }
.red-arrow { position: absolute; left: 233px; top: 446px; width: 24px; height: 42px; z-index: 3; }
.edge {
  position: absolute;
  left: 1347px;
  top: 33px;
  width: 3px;
  height: 603px;
  background: #f1f1f1;
  border-left: 1px solid #e5e5e5;
}
```
